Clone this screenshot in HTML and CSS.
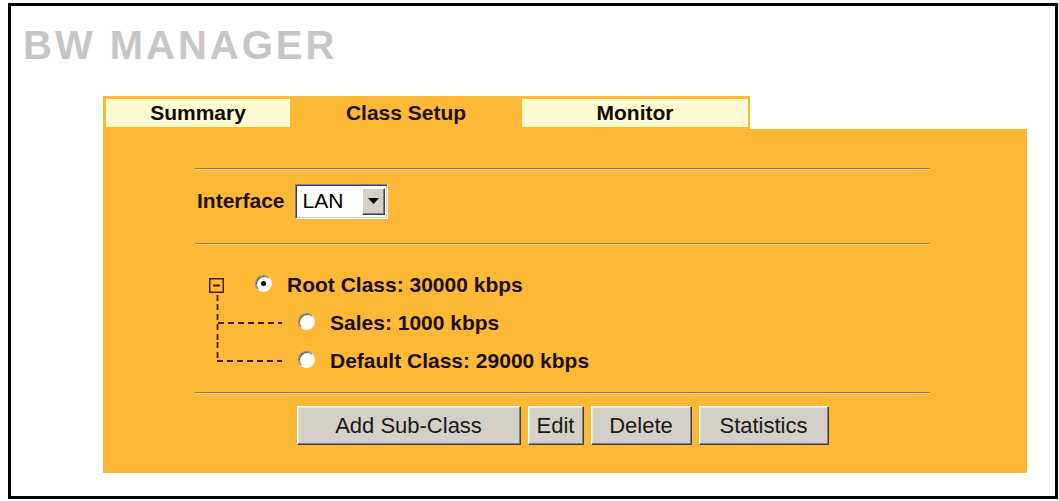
FILE: index.html
```html
<!DOCTYPE html>
<html>
<head>
<meta charset="utf-8">
<title>BW Manager</title>
<link rel="stylesheet" href="styles.css">
</head>
<body>
<div class="frame">
  <h1 class="title">BW MANAGER</h1>
  <div class="tabs-wrap">
    <div class="tabbar">
      <div class="tab tab-summary">Summary</div>
      <div class="tab tab-setup active">Class Setup</div>
      <div class="tab tab-monitor">Monitor</div>
    </div>
    <div class="panel">
      <hr class="sep">
      <div class="iface">
        <span class="label">Interface</span>
        <div class="select">
          <span class="sel-val">LAN</span>
          <span class="sel-btn"><svg width="11" height="6" viewBox="0 0 11 6"><path d="M0 0H11L5.5 6Z" fill="#000"/></svg></span>
        </div>
      </div>
      <hr class="sep">
      <div class="tree">
        <div class="row">
          <span class="gutter g-root">
            <svg width="60" height="38" viewBox="0 0 60 38">
              <rect x="14.75" y="12.75" width="13.5" height="13.5" fill="none" stroke="#3a2010" stroke-width="1.5"/>
              <line x1="18" y1="19.5" x2="25" y2="19.5" stroke="#3a2010" stroke-width="2"/>
              <line x1="22.5" y1="29" x2="22.5" y2="38" stroke="#3a1e0a" stroke-width="1.8" stroke-dasharray="6 4"/>
            </svg>
          </span>
          <span class="radio on"><span class="dot"></span></span>
          <span class="text">Root Class: 30000 kbps</span>
        </div>
        <div class="row">
          <span class="gutter g-child">
            <svg width="103" height="38" viewBox="0 0 103 38">
              <line x1="22.5" y1="0" x2="22.5" y2="38" stroke="#3a1e0a" stroke-width="1.8" stroke-dasharray="6 4"/>
              <line x1="23" y1="19" x2="87" y2="19" stroke="#3a1e0a" stroke-width="1.8" stroke-dasharray="6 4"/>
            </svg>
          </span>
          <span class="radio"></span>
          <span class="text">Sales: 1000 kbps</span>
        </div>
        <div class="row">
          <span class="gutter g-child">
            <svg width="103" height="38" viewBox="0 0 103 38">
              <line x1="22.5" y1="0" x2="22.5" y2="19" stroke="#3a1e0a" stroke-width="1.8" stroke-dasharray="6 4"/>
              <line x1="22" y1="19" x2="87" y2="19" stroke="#3a1e0a" stroke-width="1.8" stroke-dasharray="6 4"/>
            </svg>
          </span>
          <span class="radio"></span>
          <span class="text">Default Class: 29000 kbps</span>
        </div>
      </div>
      <hr class="sep sep-last">
      <div class="buttons">
        <button class="btn btn-add">Add Sub-Class</button>
        <button class="btn btn-edit">Edit</button>
        <button class="btn btn-delete">Delete</button>
        <button class="btn btn-stats">Statistics</button>
      </div>
    </div>
  </div>
</div>
</body>
</html>
```
FILE: styles.css
```css
html, body {
  margin: 0;
  padding: 0;
  background: #ffffff;
}

body {
  font-family: "Liberation Sans", Arial, sans-serif;
  color: #1a0e05;
}

.frame {
  margin: 3px 0 0 8px;
  width: 1050px;
  height: 496px;
  box-sizing: border-box;
  border: 3px solid #000000;
  background: #ffffff;
  overflow: hidden;
}

.title {
  margin: 19px 0 0 12px;
  font-size: 40px;
  line-height: 40px;
  font-weight: bold;
  letter-spacing: 3px;
  color: #c6c6c6;
}

.tabs-wrap {
  margin: 31px 0 0 92px;
  width: 924px;
}

.tabbar {
  width: 647px;
  height: 33px;
  box-sizing: border-box;
  padding: 3px 2px 2px 3px;
  background: #fdb935;
  display: flex;
}

.tab {
  height: 28px;
  line-height: 28px;
  text-align: center;
  font-weight: bold;
  font-size: 21px;
  background: #fffbd2;
  color: #120a04;
}

.tab.active {
  background: transparent;
  color: #1e1006;
}

.tab-summary { width: 184px; }
.tab-setup { width: 232px; }
.tab-monitor { width: 226px; }

.panel {
  width: 924px;
  height: 344px;
  box-sizing: border-box;
  padding: 39px 97px 28px 92px;
  background: #fdb935;
  display: flex;
  flex-direction: column;
}

.sep {
  margin: 0;
  height: 0;
  border: 0;
  border-top: 1px solid #9a7c4c;
  border-bottom: 1px solid #ffd98c;
}

.iface {
  margin: 14px 0 25px 0;
  display: flex;
  align-items: center;
  gap: 10px;
  height: 34px;
}

.label {
  padding-left: 2px;
  font-weight: bold;
  font-size: 21px;
  color: #1e1006;
}

.select {
  width: 93px;
  height: 35px;
  box-sizing: border-box;
  border: 1px solid;
  border-color: #808080 #ffffff #ffffff #808080;
  box-shadow: inset 1px 1px 0 #404040, inset -1px -1px 0 #d4d0c8;
  background: #ffffff;
  display: flex;
  align-items: center;
  justify-content: space-between;
  padding: 3px 2px 3px 7px;
}

.sel-val {
  font-size: 21px;
  color: #000000;
}

.sel-btn {
  width: 23px;
  height: 27px;
  box-sizing: border-box;
  background: #d4d0c8;
  border: 1px solid;
  border-color: #ffffff #404040 #404040 #ffffff;
  box-shadow: inset -1px -1px 0 #808080;
  display: flex;
  align-items: center;
  justify-content: center;
}

.tree {
  margin-top: 21px;
  display: flex;
  flex-direction: column;
}

.row {
  height: 38px;
  display: flex;
  align-items: center;
}

.gutter {
  display: block;
  height: 38px;
}

.gutter svg {
  display: block;
}

.g-root { width: 60px; }
.g-child { width: 103px; }

.radio {
  width: 17px;
  height: 17px;
  box-sizing: border-box;
  border-radius: 50%;
  background: #ffffff;
  border: 1px solid;
  border-color: #8a8a8a #f4f4f4 #ffffff #8a8a8a;
  box-shadow: inset 1px 1px 0 #5a5a5a;
  display: flex;
  align-items: center;
  justify-content: center;
  margin-top: -3px;
}

.dot {
  width: 5px;
  height: 5px;
  border-radius: 50%;
  background: #000000;
}

.text {
  margin-left: 15px;
  font-weight: bold;
  font-size: 21px;
  color: #1a0e05;
}

.sep-last {
  margin-top: 12px;
}

.buttons {
  margin-top: 12px;
  display: flex;
  justify-content: center;
  gap: 7px;
}

.btn {
  height: 39px;
  box-sizing: border-box;
  padding: 0;
  background: #d4d0c8;
  border: 1px solid;
  border-color: #ffffff #404040 #404040 #ffffff;
  box-shadow: inset -1px -1px 0 #808080, inset 1px 1px 0 #ece9e4;
  font-family: "Liberation Sans", Arial, sans-serif;
  font-size: 22px;
  color: #1a1a1a;
}

.btn-add { width: 224px; }
.btn-edit { width: 56px; }
.btn-delete { width: 101px; }
.btn-stats { width: 130px; }
```
